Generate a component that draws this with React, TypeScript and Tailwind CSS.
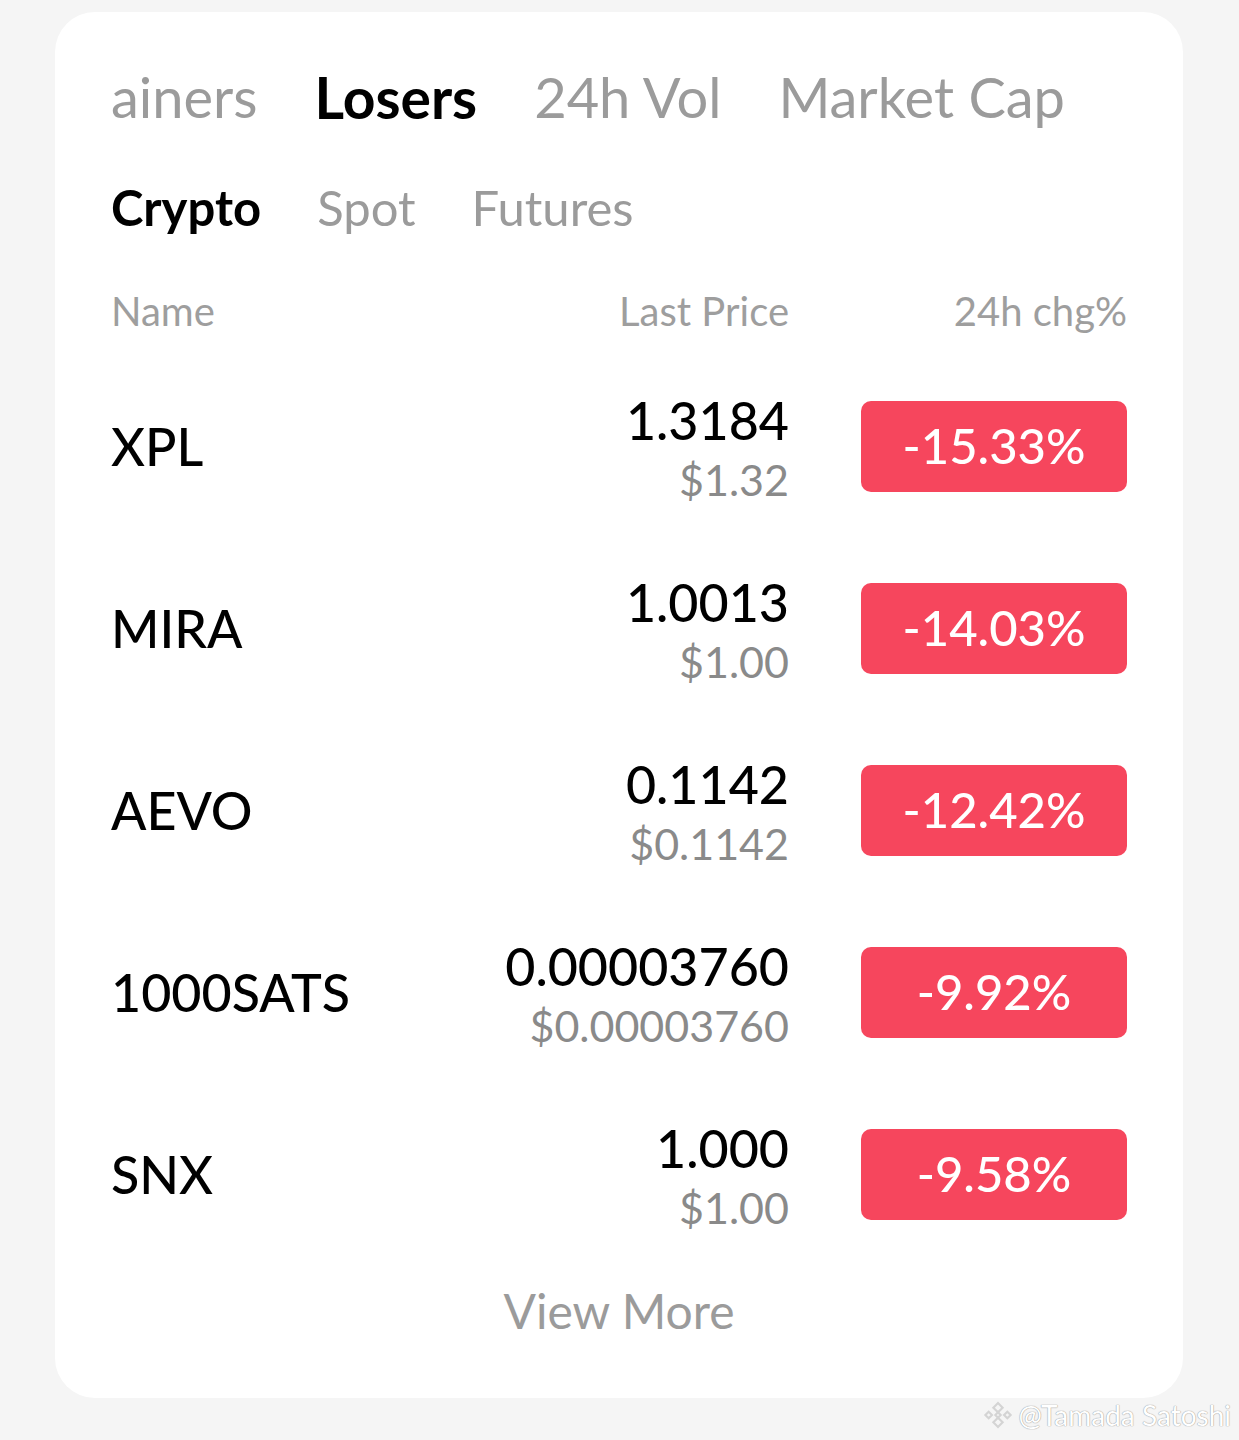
import React from "react";

type Row = {
  symbol: string;
  price: string;
  usd: string;
  change: string;
};

const rows: Row[] = [
  { symbol: "XPL", price: "1.3184", usd: "$1.32", change: "-15.33%" },
  { symbol: "MIRA", price: "1.0013", usd: "$1.00", change: "-14.03%" },
  { symbol: "AEVO", price: "0.1142", usd: "$0.1142", change: "-12.42%" },
  { symbol: "1000SATS", price: "0.00003760", usd: "$0.00003760", change: "-9.92%" },
  { symbol: "SNX", price: "1.000", usd: "$1.00", change: "-9.58%" },
];

const mainTabs = ["ainers", "Losers", "24h Vol", "Market Cap"];
const subTabs = ["Crypto", "Spot", "Futures"];

function BinanceMark() {
  return (
    <svg width="32" height="32" viewBox="0 0 24 24" className="shrink-0">
      <g fill="none" stroke="#d4d4d4" strokeWidth="1.6">
        <path d="M12 3 L15.5 6.5 L12 10 L8.5 6.5 Z" />
        <path d="M12 14 L15.5 17.5 L12 21 L8.5 17.5 Z" />
        <path d="M5 9.5 L7.5 12 L5 14.5 L2.5 12 Z" />
        <path d="M19 9.5 L21.5 12 L19 14.5 L16.5 12 Z" />
        <path d="M12 10 L14 12 L12 14 L10 12 Z" />
      </g>
    </svg>
  );
}

export default function App() {
  const [tab, setTab] = React.useState("Losers");
  const [sub, setSub] = React.useState("Crypto");

  return (
    <div className="relative min-h-[1440px] w-full bg-[#f5f5f5] pt-[12px] font-['Lato',sans-serif]">
      <div className="mx-[55px] w-[1128px] rounded-[40px] bg-white px-[56px] pt-[55px] pb-[41px]">
        <div className="flex h-[60px] items-center gap-[57px] whitespace-nowrap">
          {mainTabs.map((t) => (
            <button
              key={t}
              onClick={() => setTab(t)}
              className={
                t === tab
                  ? "text-[57px] leading-[60px] font-bold text-black"
                  : "text-[56px] leading-[60px] font-normal text-[#9b9b9b]"
              }
            >
              {t}
            </button>
          ))}
        </div>

        <div className="mt-[50px] flex h-[60px] items-center gap-[56px] whitespace-nowrap">
          {subTabs.map((t) => (
            <button
              key={t}
              onClick={() => setSub(t)}
              className={
                t === sub
                  ? "text-[49px] leading-[60px] font-bold text-black"
                  : "text-[49px] leading-[60px] font-normal text-[#9b9b9b]"
              }
            >
              {t}
            </button>
          ))}
        </div>

        <div className="mt-[44px] flex h-[60px] items-center text-[40px] text-[#9e9e9e]">
          <div className="flex-1">Name</div>
          <div className="text-right">Last Price</div>
          <div className="w-[338px] text-right">24h chg%</div>
        </div>

        <div className="mt-[14px]">
          {rows.map((r) => (
            <div key={r.symbol} className="flex h-[182px] items-center">
              <div className="flex-1 text-[52px] font-medium text-black">{r.symbol}</div>
              <div className="flex flex-col items-end pt-[8px]">
                <div className="text-[52px] leading-[60px] font-medium text-black">{r.price}</div>
                <div className="text-[43px] leading-[60px] text-[#8a8a8a]">{r.usd}</div>
              </div>
              <div className="ml-[72px] flex h-[91px] w-[266px] items-center justify-center rounded-[10px] bg-[#f6465d] text-[49px] font-medium text-white">
                {r.change}
              </div>
            </div>
          ))}
        </div>

        <div className="flex h-[92px] items-center justify-center">
          <button className="text-[48px] text-[#9b9b9b]">View More</button>
        </div>
      </div>

      <div className="absolute right-[8px] top-[1394px] flex items-center gap-[4px] text-[28px] text-white [text-shadow:0_0_1px_#9a9a9a,0_0_1px_#9a9a9a]">
        <BinanceMark />
        <span>@Tamada Satoshi</span>
      </div>
    </div>
  );
}
